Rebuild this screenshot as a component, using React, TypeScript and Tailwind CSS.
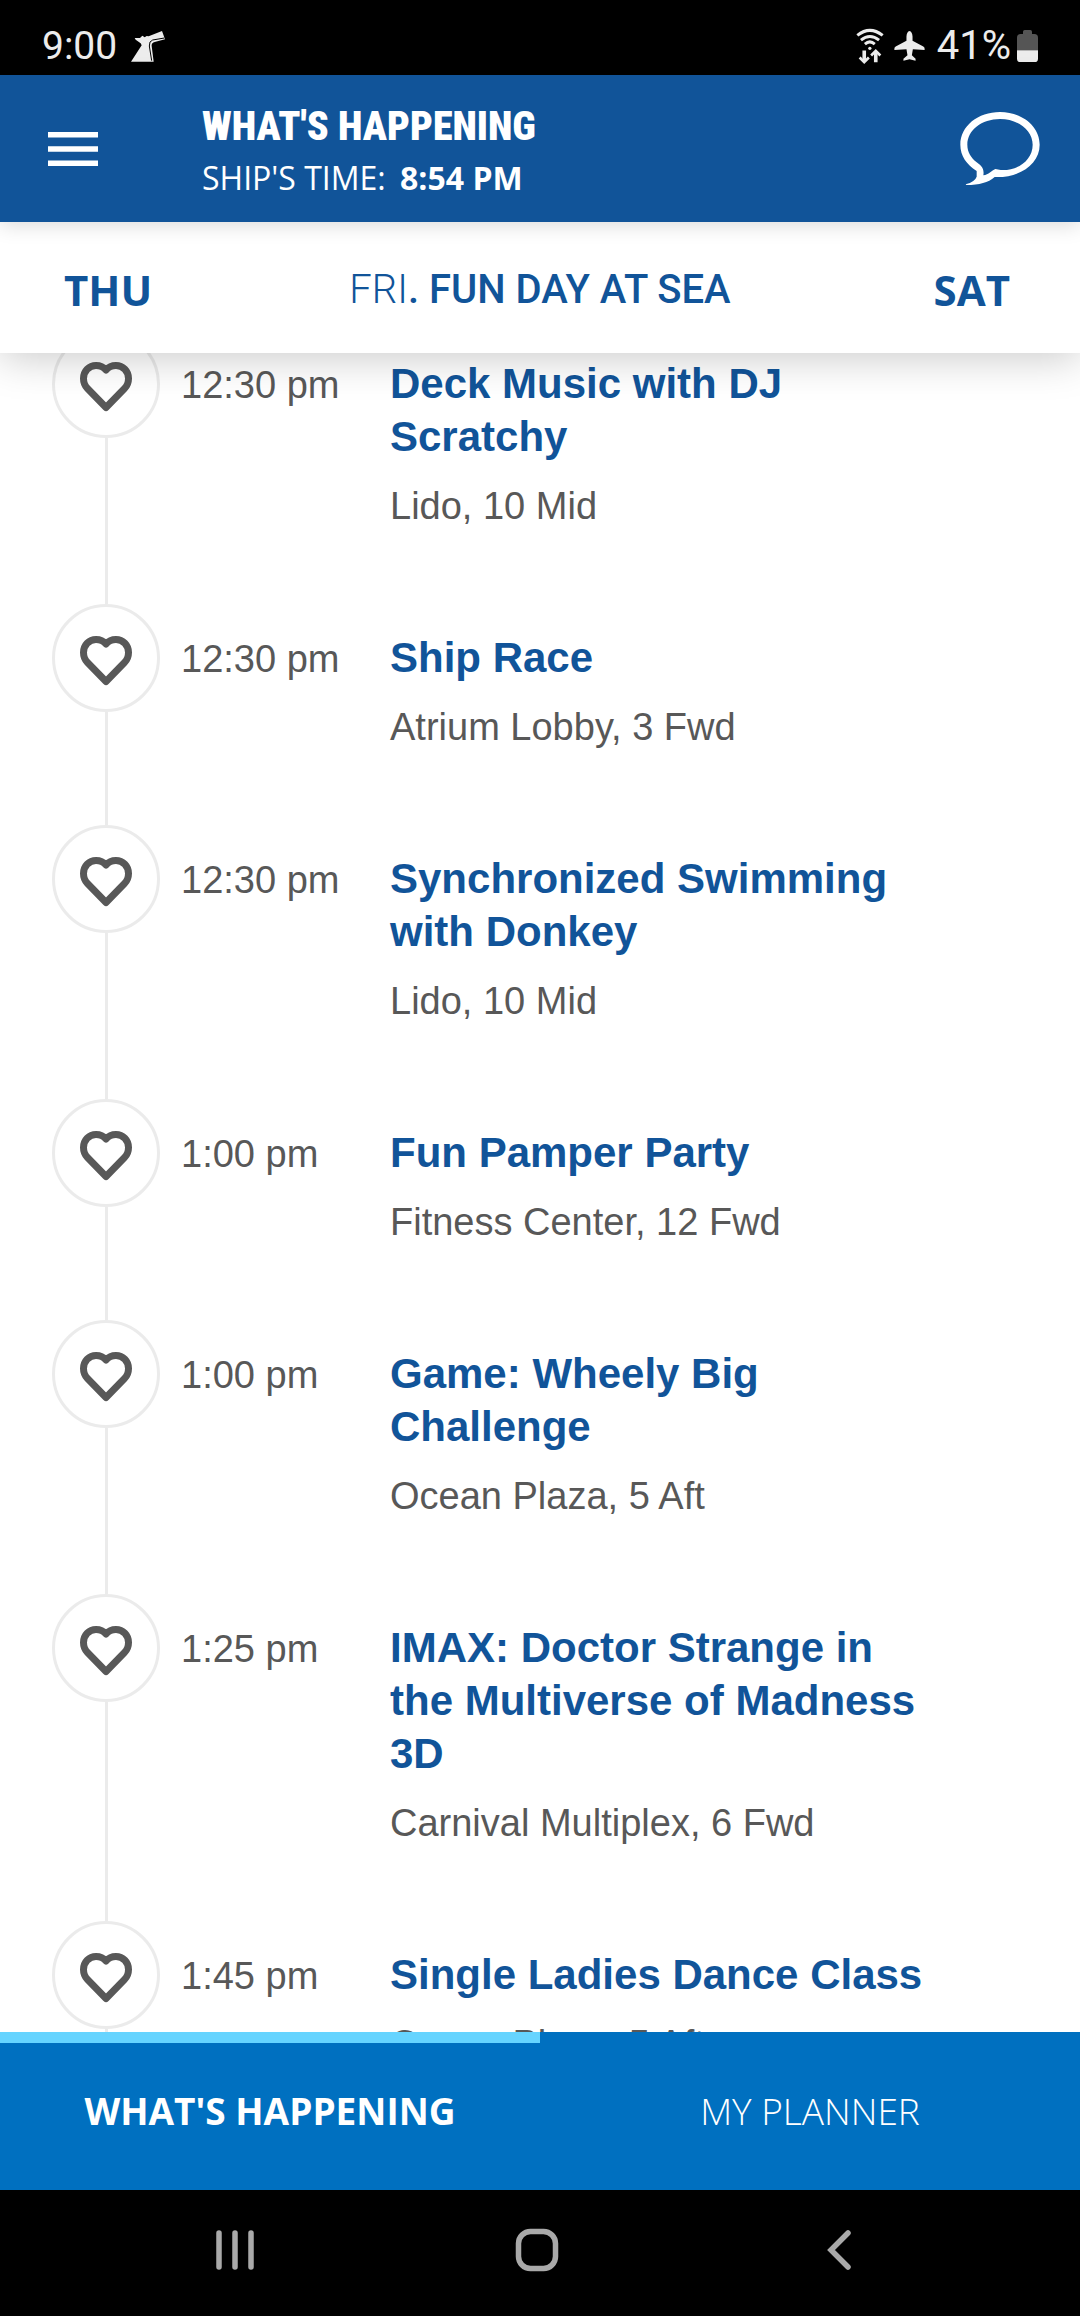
type Activity = { time: string; title: string; place: string };

const activities: Activity[] = [
  { time: "12:30 pm", title: "Deck Music with DJ Scratchy", place: "Lido, 10 Mid" },
  { time: "12:30 pm", title: "Ship Race", place: "Atrium Lobby, 3 Fwd" },
  { time: "12:30 pm", title: "Synchronized Swimming with Donkey", place: "Lido, 10 Mid" },
  { time: "1:00 pm", title: "Fun Pamper Party", place: "Fitness Center, 12 Fwd" },
  { time: "1:00 pm", title: "Game: Wheely Big Challenge", place: "Ocean Plaza, 5 Aft" },
  { time: "1:25 pm", title: "IMAX: Doctor Strange in the Multiverse of Madness 3D", place: "Carnival Multiplex, 6 Fwd" },
  { time: "1:45 pm", title: "Single Ladies Dance Class", place: "Ocean Plaza, 5 Aft" },
];

function FunnelIcon() {
  return (
    <svg className="h-[31px] w-[34px]" viewBox="391 93 102 93" aria-hidden="true">
      <path fill="#ececec" d="M402 114L418 114L425 107L432 112L438 108L444 109L484 93L493 118L462 126Q452 129 453 138L459 185L391 185L423 136L420 130L405 119Z" />
      <path fill="none" stroke="#000" strokeWidth="3" d="M491 114L456 120Q445 123 446 138L453 182" />
    </svg>
  );
}

function WifiIcon() {
  return (
    <svg className="h-9 w-7" viewBox="100 85 85 108" fill="none" stroke="#ececec" strokeWidth="9" aria-hidden="true">
      <path d="M104 107Q142 76 181 107" />
      <path d="M115 121Q142 99 170 121" />
      <path d="M127 133Q142 120 157 133" />
      <circle cx="142" cy="146" r="5" fill="#ececec" stroke="none" />
      <path strokeWidth="11" d="M125 153V186M160 188V156" />
      <path strokeWidth="8" d="M111 174L125 188L139 174M146 168L160 154L174 168" />
    </svg>
  );
}

function AirplaneIcon() {
  return (
    <svg className="h-[30px] w-[31px]" viewBox="217 95 92 89" fill="#ececec" aria-hidden="true">
      <path d="M263 95Q255 97 254 111V124L222 141Q217 144 218 151L254 149L257 167L245 177V183L263 179L281 183V177L270 167L273 149L308 151Q309 144 304 141L272 124V111Q271 97 263 95Z" />
    </svg>
  );
}

function BatteryIcon() {
  return (
    <svg className="h-8 w-[21px]" viewBox="591 92 63 96" aria-hidden="true">
      <path fill="#555" d="M591 153V115Q591 104 602 104H609V97Q609 92 614 92H631Q636 92 636 97V104H643Q654 104 654 115V153Z" />
      <path fill="#ececec" d="M591 153H654V178Q654 188 644 188H601Q591 188 591 178Z" />
    </svg>
  );
}

function ChatIcon() {
  return (
    <svg className="h-[73px] w-20" viewBox="422 336 238 219" fill="#fff" fillRule="evenodd" aria-hidden="true">
      <path d="M438 553Q466 545 471 530L471 513C441 493 422 468 422 434C422 378 475 336 541 336C607 336 660 378 660 434C660 492 600 534 525 531C505 548 480 555 440 555ZM443 434C443 391 486 357 541 357C596 357 639 391 639 434C639 480 595 513 543 510L527 507C516 512 507 524 491 526C495 503 482 495 470 486C455 474 443 457 443 434Z" />
    </svg>
  );
}

function HeartIcon() {
  return (
    <svg className="size-full" viewBox="0 0 102 102" fill="none" stroke="#585858" strokeWidth="7" strokeLinejoin="round" aria-hidden="true">
      <path d="M51 74.5L32.5 55.5C30 53 28.5 49.500 28.500 45.500C28.500 38 34 32.500 41 32.500C45 32.500 48.500 34 51 37C53.500 34 57 32.500 61 32.500C68 32.500 73.500 38 73.500 45.500C73.500 49.500 72 53 69.500 55.500Z" />
    </svg>
  );
}

function ActivityRow({ time, title, place }: Activity) {
  return (
    <li className="flex pl-[52px] pr-[148px]">
      <div className="flex w-[108px] shrink-0 flex-col items-center">
        <button type="button" aria-label={`Add ${title} to my planner`} className="size-[108px] shrink-0 rounded-full border-3 border-[#ebebeb] bg-white">
          <HeartIcon />
        </button>
        <div className="w-[3px] flex-1 bg-[#ebebeb]" />
      </div>
      <time className="w-[230px] shrink-0 pl-[21px] pt-[29px] text-[38px] leading-[53px] text-[#585858]">{time}</time>
      <div className="flex-1 pb-[77px] pt-[27px]">
        <h2 className="text-[42px] font-bold leading-[53px] text-[#115499]">{title}</h2>
        <p className="pt-[22px] text-[38px] leading-[42px] text-[#585858]">{place}</p>
      </div>
    </li>
  );
}

export default function App() {
  return (
    <div className="flex h-screen flex-col overflow-hidden bg-white font-['Liberation_Sans',Arial,sans-serif]">
      <div className="flex h-[75px] shrink-0 items-center bg-black pl-[42px] pr-[42px] pt-[17px] font-[Roboto,sans-serif] text-[39px] leading-[48px] text-[#ececec]">
        <span>9:00</span>
        <span className="pl-[14px]"><FunnelIcon /></span>
        <div className="ml-auto flex items-center">
          <WifiIcon />
          <span className="pl-[10px]"><AirplaneIcon /></span>
          <span className="pl-3 pr-[6px] text-[40px]">41%</span>
          <BatteryIcon />
        </div>
      </div>

      <header className="relative z-20 flex h-[147px] shrink-0 items-center bg-[#115499] pl-12 pr-10 text-white shadow-[0_2px_20px_rgba(0,0,0,0.16)]">
        <button type="button" aria-label="Menu" className="w-[154px]">
          <svg className="h-[34px] w-[50px]" viewBox="0 0 50 34" fill="#fff" aria-hidden="true">
            <path d="M0 0H50V5.600H0ZM0 14.200H50V19.800H0ZM0 28.400H50V34H0Z" />
          </svg>
        </button>
        <div className="flex-1">
          <h1 className="font-['Roboto_Condensed',Roboto,sans-serif] text-[40px] font-black leading-[58px]">WHAT'S HAPPENING</h1>
          <p className="font-['Open_Sans',sans-serif] text-[32px] leading-[44px]">
            SHIP'S TIME: <strong className="pl-[6px] font-bold">8:54 PM</strong>
          </p>
        </div>
        <button type="button" aria-label="Chat"><ChatIcon /></button>
      </header>

      <nav aria-label="Days" className="relative z-10 grid h-[131px] shrink-0 grid-cols-[1fr_auto_1fr] items-center bg-white pl-16 pr-[70px] pt-1 text-[#115499] shadow-[0_4px_40px_rgba(0,0,0,0.22)]">
        <button type="button" className="justify-self-start font-['Open_Sans',sans-serif] text-[42px] font-bold leading-[56px]">THU</button>
        <p className="pl-[6px] font-[Roboto,sans-serif] text-[40px] font-medium leading-[56px]">
          <span className="font-light">FRI</span>. FUN DAY AT SEA
        </p>
        <button type="button" className="justify-self-end font-['Open_Sans',sans-serif] text-[42px] font-bold leading-[56px]">SAT</button>
      </nav>

      <main className="min-h-0 flex-1 overflow-hidden">
        <ul className="-mt-[23px]">
          {activities.map((a) => (
            <ActivityRow key={a.title} {...a} />
          ))}
        </ul>
      </main>

      <div role="tablist" className="relative grid h-[158px] shrink-0 grid-cols-2 bg-[#0070c0] font-['Open_Sans',sans-serif] text-[37px] leading-[48px] text-white">
        <button type="button" role="tab" aria-selected="true" className="border-t-[11px] border-[#66d4ff] pb-3 font-bold">WHAT'S HAPPENING</button>
        <button type="button" role="tab" aria-selected="false" className="border-t-[11px] border-transparent pb-3 font-light">MY PLANNER</button>
      </div>

      <div className="grid h-[126px] shrink-0 grid-cols-3 items-center justify-items-center bg-black pb-[6px] pl-[84px] pr-[90px]">
        <button type="button" aria-label="Recent apps">
          <svg className="h-11 w-11" viewBox="0 0 44 44" fill="none" stroke="#a9a9a9" strokeWidth="5.500" strokeLinecap="round" aria-hidden="true">
            <path d="M6 5V39M22 5V39M38 5V39" />
          </svg>
        </button>
        <button type="button" aria-label="Home">
          <svg className="h-11 w-11" viewBox="0 0 44 44" fill="none" stroke="#a9a9a9" strokeWidth="5.500" aria-hidden="true">
            <rect x="3.500" y="3.500" width="37" height="37" rx="12" />
          </svg>
        </button>
        <button type="button" aria-label="Back">
          <svg className="h-11 w-11" viewBox="0 0 44 44" fill="none" stroke="#a9a9a9" strokeWidth="5.500" strokeLinecap="round" strokeLinejoin="miter" aria-hidden="true">
            <path d="M31 5L14 22L31 39" />
          </svg>
        </button>
      </div>
    </div>
  );
}
